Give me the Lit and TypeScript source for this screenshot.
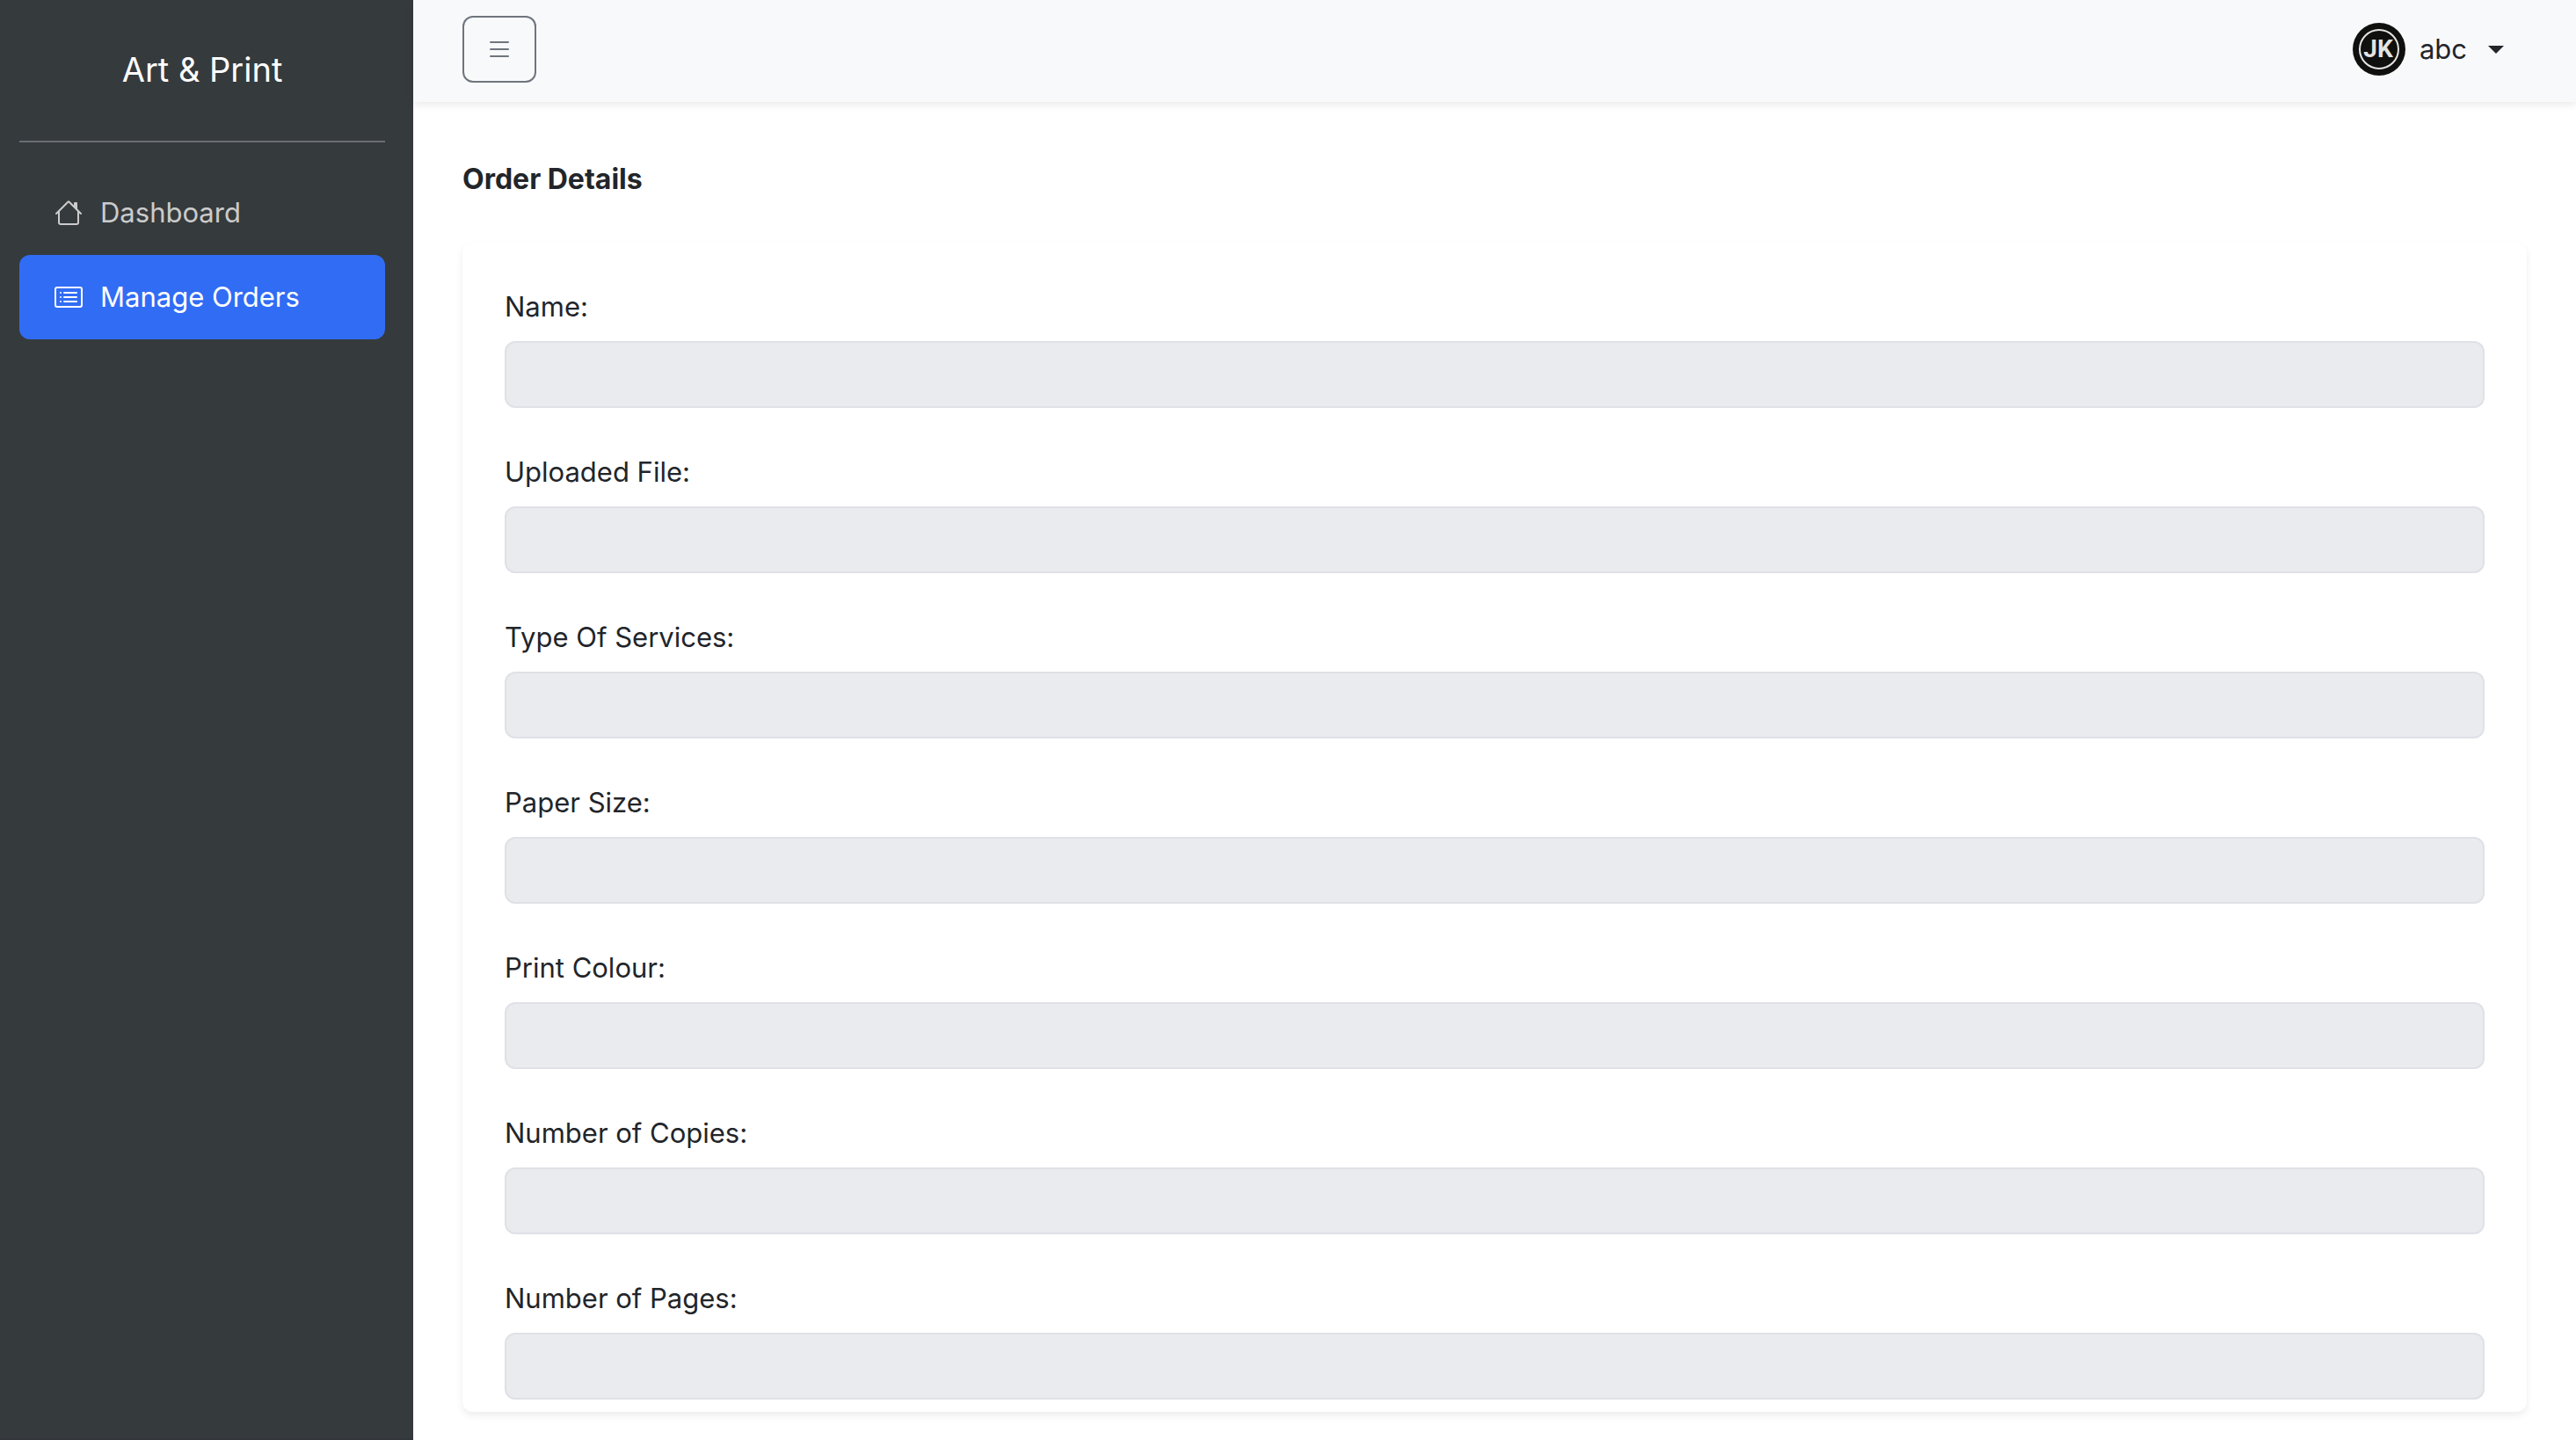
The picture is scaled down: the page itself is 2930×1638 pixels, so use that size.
import { LitElement, html, css, svg } from "lit";
import { customElement, property, state } from "lit/decorators.js";

interface NavItem {
  label: string;
  icon: "home" | "list";
  active: boolean;
}

const NAV: NavItem[] = [
  { label: "Dashboard", icon: "home", active: false },
  { label: "Manage Orders", icon: "list", active: true },
];

const FIELDS = [
  { id: "name", label: "Name:" },
  { id: "file", label: "Uploaded File:" },
  { id: "services", label: "Type Of Services:" },
  { id: "paper", label: "Paper Size:" },
  { id: "colour", label: "Print Colour:" },
  { id: "copies", label: "Number of Copies:" },
  { id: "pages", label: "Number of Pages:" },
];

const ICONS = {
  home: svg`<path d="M8.707 1.5a1 1 0 0 0-1.414 0L.646 8.146a.5.5 0 0 0 .708.708L2 8.207V13.5A1.5 1.5 0 0 0 3.5 15h9a1.5 1.5 0 0 0 1.5-1.5V8.207l.646.647a.5.5 0 0 0 .708-.708L13 5.793V2.5a.5.5 0 0 0-.5-.5h-1a.5.5 0 0 0-.5.5v1.293L8.707 1.5ZM13 7.207V13.5a.5.5 0 0 1-.5.5h-9a.5.5 0 0 1-.5-.5V7.207l5-5 5 5Z"/>`,
  list: svg`<path d="M14.5 3a.5.5 0 0 1 .5.5v9a.5.5 0 0 1-.5.5h-13a.5.5 0 0 1-.5-.5v-9a.5.5 0 0 1 .5-.5h13zm-13-1A1.5 1.5 0 0 0 0 3.5v9A1.5 1.5 0 0 0 1.5 14h13a1.5 1.5 0 0 0 1.5-1.5v-9A1.5 1.5 0 0 0 14.5 2h-13z"/><path d="M5 8a.5.5 0 0 1 .5-.5h7a.5.5 0 0 1 0 1h-7A.5.5 0 0 1 5 8zm0-2.5a.5.5 0 0 1 .5-.5h7a.5.5 0 0 1 0 1h-7a.5.5 0 0 1-.5-.5zm0 5a.5.5 0 0 1 .5-.5h7a.5.5 0 0 1 0 1h-7a.5.5 0 0 1-.5-.5zm-1-5a.5.5 0 1 1-1 0 .5.5 0 0 1 1 0zM4 8a.5.5 0 1 1-1 0 .5.5 0 0 1 1 0zm0 2.5a.5.5 0 1 1-1 0 .5.5 0 0 1 1 0z"/>`,
  menu: svg`<path fill-rule="evenodd" d="M2.5 12a.5.5 0 0 1 .5-.5h10a.5.5 0 0 1 0 1H3a.5.5 0 0 1-.5-.5zm0-4a.5.5 0 0 1 .5-.5h10a.5.5 0 0 1 0 1H3a.5.5 0 0 1-.5-.5zm0-4a.5.5 0 0 1 .5-.5h10a.5.5 0 0 1 0 1H3a.5.5 0 0 1-.5-.5z"/>`,
};

const icon = (name: keyof typeof ICONS) => html`
  <svg class="icon" viewBox="0 0 16 16" fill="currentColor" aria-hidden="true">${ICONS[name]}</svg>
`;

@customElement("side-nav")
export class SideNav extends LitElement {
  @property({ attribute: false }) items: NavItem[] = [];

  static styles = css`
    :host {
      display: block;
      box-sizing: border-box;
      padding: 48px 32px 32px 22px;
      background: #353a3d;
      border-bottom: 2px solid #32353b;
      color: #fff;
    }
    .brand {
      display: block;
      color: inherit;
      text-align: center;
      text-decoration: none;
      font-size: 38px;
      line-height: 62px;
    }
    .rule {
      height: 2px;
      margin: 50px 0 32px;
      border: 0;
      background: #6a6d73;
    }
    .list {
      display: flex;
      flex-direction: column;
      margin: 0;
      padding: 0;
      list-style: none;
    }
    .link {
      display: flex;
      align-items: center;
      gap: 20px;
      padding: 24px 40px;
      border-radius: 12px;
      color: #cbcbcb;
      font-size: 31px;
      line-height: 48px;
      text-decoration: none;
    }
    .link.active {
      background: #316cf4;
      color: #fff;
    }
    .icon {
      width: 32px;
      height: 32px;
    }
  `;

  render() {
    return html`
      <a class="brand" href="#">Art &amp; Print</a>
      <hr class="rule" />
      <nav>
        <ul class="list">
          ${this.items.map(
            (item) => html`<li>
              <a class="link ${item.active ? "active" : ""}" href="#">${icon(item.icon)}<span>${item.label}</span></a>
            </li>`,
          )}
        </ul>
      </nav>
    `;
  }
}

@customElement("top-bar")
export class TopBar extends LitElement {
  static styles = css`
    :host {
      display: flex;
      align-items: center;
      justify-content: space-between;
      padding: 18px 82px 22px 56px;
      background: #f8f9fb;
      box-shadow: 0 4px 8px rgba(0, 0, 0, 0.075);
    }
    .toggle {
      display: flex;
      align-items: center;
      justify-content: center;
      width: 84px;
      height: 76px;
      padding: 0;
      border: 2px solid #6e757d;
      border-radius: 12px;
      background: transparent;
      color: #6e757d;
    }
    .icon {
      width: 32px;
      height: 32px;
    }
    .account {
      display: flex;
      align-items: center;
      padding: 0;
      border: 0;
      background: none;
      color: #22252a;
      font: inherit;
      font-size: 31px;
      line-height: 50px;
    }
    .avatar {
      width: 60px;
      height: 60px;
      margin-right: 16px;
    }
    .monogram {
      font: bold 28px Roboto, sans-serif;
    }
    .caret {
      margin-left: 24px;
      border: 9px solid transparent;
      border-top-color: currentColor;
      border-bottom: 0;
    }
  `;

  render() {
    return html`
      <button class="toggle" type="button" aria-label="Toggle sidebar">${icon("menu")}</button>
      <button class="account" type="button">
        <svg class="avatar" viewBox="0 0 60 60" aria-hidden="true">
          <circle cx="30" cy="30" r="30" fill="#10110f" />
          <circle cx="30" cy="30" r="22" fill="none" stroke="#e4e4e2" stroke-width="2" />
          <text class="monogram" x="29" y="39" text-anchor="middle" fill="#e4e4e2">JK</text>
        </svg>
        <span>abc</span>
        <span class="caret"></span>
      </button>
    `;
  }
}

@customElement("order-details")
export class OrderDetails extends LitElement {
  static styles = css`
    :host {
      display: block;
      padding: 68px 56px 32px;
    }
    .heading {
      margin: 0 0 52px;
      font-size: 32px;
      font-weight: 700;
      line-height: 40px;
    }
    .card {
      display: flex;
      flex-direction: column;
      gap: 48px;
      padding: 48px 48px 14px;
      border-radius: 12px;
      background: #fff;
      box-shadow: 0 4px 8px rgba(0, 0, 0, 0.075);
    }
    .field {
      display: flex;
      flex-direction: column;
      gap: 14px;
    }
    .label {
      font-size: 31px;
      line-height: 50px;
    }
    .input {
      box-sizing: border-box;
      width: 100%;
      height: 76px;
      padding: 12px 24px;
      border: 2px solid #dfe1e6;
      border-radius: 12px;
      background: #eaebef;
      color: inherit;
      font: inherit;
      font-size: 31px;
    }
  `;

  render() {
    return html`
      <h1 class="heading">Order Details</h1>
      <form class="card">
        ${FIELDS.map(
          (f) => html`<div class="field">
            <label class="label" for=${f.id}>${f.label}</label>
            <input class="input" id=${f.id} type="text" readonly />
          </div>`,
        )}
      </form>
    `;
  }
}

@customElement("app-root")
export class AppRoot extends LitElement {
  @state() private nav = NAV;

  static styles = css`
    :host {
      display: grid;
      grid-template-columns: 470px minmax(0, 1fr);
      min-height: 100vh;
      background: #fff;
      color: #22252a;
      font-family: Inter, "Liberation Sans", sans-serif;
    }
  `;

  render() {
    return html`
      <side-nav .items=${this.nav}></side-nav>
      <main>
        <top-bar></top-bar>
        <order-details></order-details>
      </main>
    `;
  }
}
